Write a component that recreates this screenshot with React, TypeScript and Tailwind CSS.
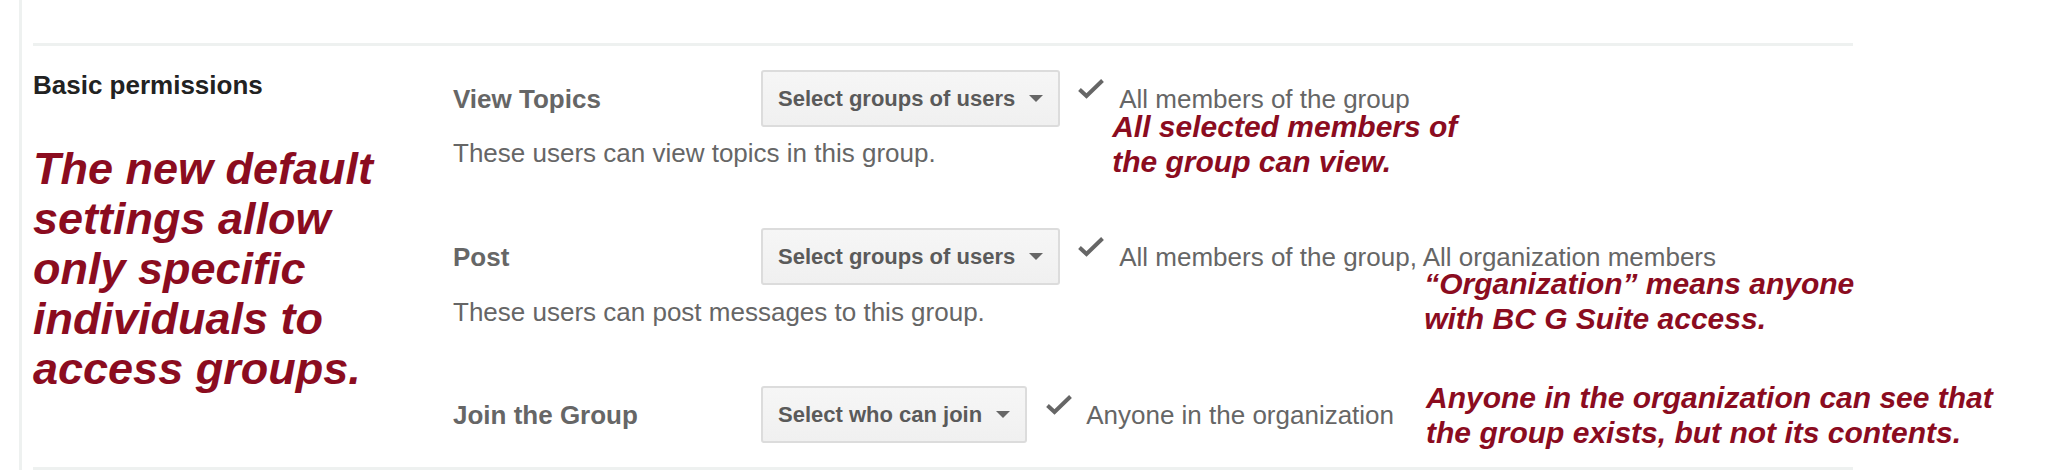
const RED = 'text-[#8b0c1f]'

function Check() {
  return (
    <svg width="26" height="20" viewBox="0 0 26 20" className="shrink-0 self-start mt-[9px]">
      <path d="M1.5 10.5 L8.5 17 L24.5 1.5" fill="none" stroke="#666" strokeWidth="4" strokeLinejoin="miter" />
    </svg>
  )
}

function SelectBox({ label }: { label: string }) {
  return (
    <div className="h-[57px] flex items-center shrink-0 border-2 border-[#dcdcdc] rounded-[3px] bg-gradient-to-b from-[#f6f6f6] to-[#f0f0f0] pl-[15px] pr-[15px]">
      <span className="text-[22px] font-bold text-[#5a5a5a] leading-[26px]">{label}</span>
      <svg width="14" height="7" viewBox="0 0 14 7" className="ml-[14px]">
        <path d="M0 0 H14 L7 7 Z" fill="#666" />
      </svg>
    </div>
  )
}

export default function App() {
  return (
    <div className="w-[2059px] h-[470px] bg-white flex pl-[19px] font-['Liberation_Sans',Arial,sans-serif] overflow-hidden">
      <div className="border-l-[3px] border-[#eef1f0] pl-[11px] pt-[43px] flex flex-col">
        <div className="w-[1820px] h-[3px] bg-[#eef1f0]" />

        <div className="flex h-[421px]">
          {/* left column */}
          <div className="w-[420px] shrink-0 pt-[24px]">
            <h2 className="text-[26px] leading-[30px] font-bold text-[#222]">Basic permissions</h2>
            <p className={`mt-[44px] text-[45px] leading-[50px] font-bold italic ${RED}`}>
              The new default
              <br />
              settings allow
              <br />
              only specific
              <br />
              individuals to
              <br />
              access groups.
            </p>
          </div>

          {/* permission rows */}
          <div className="flex-1 pt-[24px] flex flex-col">
            {/* View Topics */}
            <div className="h-[158px] flex items-start">
              <div className="flex flex-col">
                <div className="h-[57px] flex items-center">
                  <div className="w-[308px] text-[26px] leading-[30px] font-bold text-[#666]">View Topics</div>
                  <SelectBox label="Select groups of users" />
                </div>
                <p className="mt-[11px] text-[26px] leading-[30px] text-[#666]">These users can view topics in this group.</p>
              </div>
              <div className="ml-[18px] flex flex-col">
                <div className="h-[57px] flex items-center">
                  <Check />
                  <span className="ml-[15px] text-[26px] leading-[30px] text-[#666]">All members of the group</span>
                </div>
                <p className={`-mt-[18px] ml-[34px] text-[30px] leading-[35px] font-bold italic ${RED}`}>
                  All selected members of
                  <br />
                  the group can view.
                </p>
              </div>
            </div>

            {/* Post */}
            <div className="h-[158px] flex items-start">
              <div className="flex flex-col">
                <div className="h-[57px] flex items-center">
                  <div className="w-[308px] text-[26px] leading-[30px] font-bold text-[#666]">Post</div>
                  <SelectBox label="Select groups of users" />
                </div>
                <p className="mt-[12px] text-[26px] leading-[30px] text-[#666]">These users can post messages to this group.</p>
              </div>
              <div className="ml-[18px] flex flex-col">
                <div className="h-[57px] flex items-center">
                  <Check />
                  <span className="ml-[15px] text-[26px] leading-[30px] text-[#666]">
                    All members of the group, All organization members
                  </span>
                </div>
                <p className={`-mt-[19px] ml-[346px] text-[30px] leading-[35px] font-bold italic ${RED}`}>
                  “Organization” means anyone
                  <br />
                  with BC G Suite access.
                </p>
              </div>
            </div>

            {/* Join the Group */}
            <div className="h-[81px] flex items-start">
              <div className="h-[57px] flex items-center">
                <div className="w-[308px] text-[26px] leading-[30px] font-bold text-[#666]">Join the Group</div>
                <SelectBox label="Select who can join" />
              </div>
              <div className="ml-[19px] h-[57px] flex items-center">
                <Check />
                <span className="ml-[14px] text-[26px] leading-[30px] text-[#666]">Anyone in the organization</span>
                <p className={`ml-[32px] text-[30px] leading-[35px] font-bold italic ${RED}`}>
                  Anyone in the organization can see that
                  <br />
                  the group exists, but not its contents.
                </p>
              </div>
            </div>
          </div>
        </div>

        <div className="w-[1820px] h-[3px] bg-[#eef1f0]" />
      </div>
    </div>
  )
}
